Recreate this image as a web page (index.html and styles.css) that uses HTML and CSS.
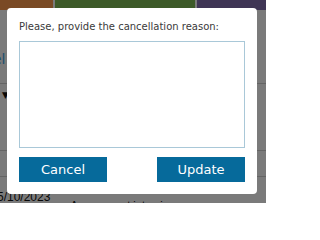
FILE: index.html
```html
<!DOCTYPE html>
<html>
<head>
<meta charset="utf-8">
<link rel="stylesheet" href="styles.css">
</head>
<body>
<div class="page">
  <div class="topbar">
    <div class="seg brown"></div>
    <div class="seg green"></div>
    <div class="seg purple"></div>
  </div>
  <div class="content">
    <div class="row r1"><span class="link">el</span></div>
    <div class="row r2"><span class="caret">▼</span></div>
    <div class="row r3"></div>
    <div class="row r5"><span class="date">5/10/2023</span><span class="desc">Assessment interview</span></div>
  </div>
</div>
<div class="overlay"></div>
<div class="dialog">
  <label class="prompt" for="reason">Please, provide the cancellation reason:</label>
  <textarea id="reason" class="reason"></textarea>
  <div class="actions">
    <button class="btn">Cancel</button>
    <button class="btn">Update</button>
  </div>
</div>
</body>
</html>
```
FILE: styles.css
```css
html, body {
  margin: 0;
  padding: 0;
  width: 266px;
  height: 203px;
  overflow: hidden;
  font-family: "DejaVu Sans", Verdana, sans-serif;
}
.page {
  width: 266px;
  height: 203px;
  background: #f4f4f4;
  overflow: hidden;
}
.topbar {
  display: flex;
  gap: 2px;
  height: 10px;
}
.seg { height: 10px; }
.brown { width: 53px; background: #f4944a; }
.green { width: 140px; background: #7ab450; }
.purple { flex: 1; background: #7e6aaa; }
.content {
  display: flex;
  flex-direction: column;
}
.row {
  border-bottom: 1px solid #c8c8c8;
  font-size: 11px;
}
.r1 { height: 73px; position: relative; }
.r1 .link { position: absolute; left: -7px; top: 41px; color: #3ca0e0; font-size: 14px; }
.r2 { height: 66px; position: relative; }
.r2 .caret { position: absolute; left: 2px; top: 6px; font-size: 9px; color: #111; }
.r3 { height: 25px; }
.r5 {
  display: flex;
  align-items: flex-start;
  border: none;
  padding-top: 13px;
  color: #111;
  font-family: "Liberation Sans", Arial, sans-serif;
  font-size: 12px;
  line-height: 14px;
}
.date { margin-left: -3px; }
.desc { margin-left: 20px; margin-top: 8px; font-size: 11px; }
.overlay {
  position: absolute;
  left: 0; top: 0;
  width: 266px; height: 203px;
  background: rgba(0,0,0,0.5);
}
.dialog {
  position: absolute;
  left: 7px;
  top: 8px;
  width: 250px;
  height: 186px;
  box-sizing: border-box;
  padding: 12px 12px;
  background: #fff;
  border-radius: 4px;
  display: flex;
  flex-direction: column;
}
.prompt {
  font-family: "DejaVu Sans", Tahoma, sans-serif;
  font-size: 10px;
  line-height: 14px;
  color: #3a3a3a;
}
.reason {
  margin: 7px 0 0 0;
  width: 226px;
  height: 107px;
  box-sizing: border-box;
  border: 1px solid #a9c8d8;
  resize: none;
  padding: 0;
}
.actions {
  display: flex;
  justify-content: space-between;
  margin-top: 9px;
}
.btn {
  width: 88px;
  height: 25px;
  border: none;
  background: #066a9b;
  color: #fff;
  font-family: "DejaVu Sans", Tahoma, sans-serif;
  font-size: 13px;
  padding: 0;
  border-radius: 0;
}
```
